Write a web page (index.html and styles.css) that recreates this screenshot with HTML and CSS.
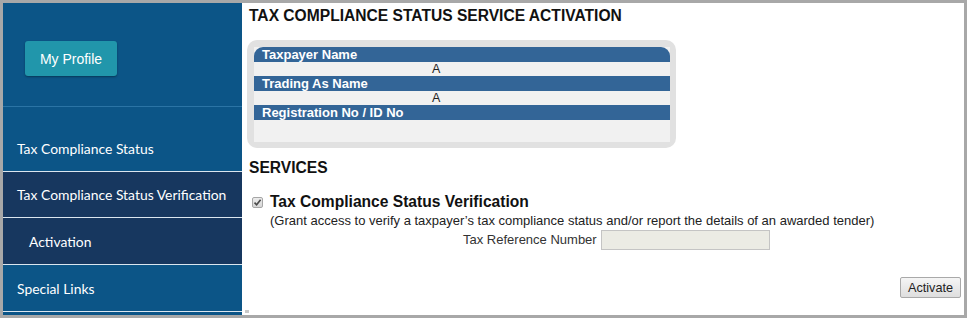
FILE: index.html
```html
<!DOCTYPE html>
<html>
<head>
<meta charset="utf-8">
<link rel="stylesheet" href="styles.css">
</head>
<body>
<div class="frame">
  <aside class="sidebar">
    <div class="profile-area">
      <button class="profile-btn">My Profile</button>
    </div>
    <div class="menu-gap"></div>
    <a class="menu-item">Tax Compliance Status</a>
    <a class="menu-item dark">Tax Compliance Status Verification</a>
    <a class="menu-item dark sub">Activation</a>
    <a class="menu-item">Special Links</a>
  </aside>
  <main class="main">
    <h1 class="title">TAX COMPLIANCE STATUS SERVICE ACTIVATION</h1>
    <div class="panel">
      <div class="panel-inner">
        <div class="bar first">Taxpayer Name</div>
        <div class="val">A</div>
        <div class="bar">Trading As Name</div>
        <div class="val">A</div>
        <div class="bar">Registration No / ID No</div>
        <div class="val empty"></div>
      </div>
    </div>
    <h2 class="title services">SERVICES</h2>
    <div class="service">
      <span class="chk"><svg width="9" height="9" viewBox="0 0 9 9"><path d="M1.5 4.6 L3.6 6.8 L7.6 1.8" fill="none" stroke="#4a4a4a" stroke-width="1.6"/></svg></span>
      <span class="service-name">Tax Compliance Status Verification</span>
    </div>
    <div class="desc">(Grant access to verify a taxpayer’s tax compliance status and/or report the details of an awarded tender)</div>
    <div class="ref-row">
      <label class="ref-label">Tax Reference Number</label>
      <input type="text" class="ref-input" disabled>
    </div>
    <div class="actions">
      <button class="activate">Activate</button>
    </div>
    <span class="grip"></span>
  </main>
</div>
</body>
</html>
```

FILE: styles.css
```css
html, body {
  margin: 0;
  padding: 0;
  background: #ffffff;
}
.frame {
  width: 961px;
  height: 312px;
  border: 3px solid #a8a8a8;
  display: flex;
  overflow: hidden;
  font-family: "Liberation Sans", Arial, sans-serif;
}
.sidebar {
  width: 239px;
  flex: none;
  background: #0c5587;
  display: flex;
  flex-direction: column;
}
.profile-area {
  height: 104px;
  border-bottom: 1px solid #2b74a5;
  padding: 38px 0 0 22px;
  box-sizing: border-box;
}
.profile-btn {
  width: 92px;
  height: 35px;
  background: #2196ab;
  border: none;
  border-radius: 3px;
  box-shadow: 0 1px 2px rgba(0,0,0,0.35);
  color: #ffffff;
  font-family: "Liberation Sans", Arial, sans-serif;
  font-size: 14px;
  padding: 0;
}
.menu-gap {
  height: 18px;
}
.menu-item {
  display: flex;
  align-items: center;
  height: 46px;
  border-bottom: 1px solid #dbe6ef;
  padding-left: 14px;
  color: #ffffff;
  font-family: Lato, "Open Sans", sans-serif;
  font-size: 13.9px;
}
.menu-item.dark {
  background: #17375f;
  height: 45px;
}
.menu-item.sub {
  padding-left: 26px;
  height: 46px;
}
.main {
  flex: 1;
  padding: 4px 0 0 7px;
  position: relative;
}
.title {
  margin: 0;
  font-size: 15.6px;
  font-weight: bold;
  line-height: 18px;
  color: #111111;
}
.panel {
  margin: 15px 0 0 -2px;
  width: 429px;
  height: 108px;
  background: #e1e1e1;
  border-radius: 10px;
  padding: 7px 6px 6px 7px;
  box-sizing: border-box;
}
.panel-inner {
  background: #f1f1f1;
  height: 95px;
}
.bar {
  height: 15px;
  line-height: 15px;
  background: #336597;
  color: #ffffff;
  font-weight: bold;
  font-size: 13px;
  padding-left: 8px;
}
.bar.first {
  border-radius: 9px 9px 0 0;
}
.val {
  height: 14px;
  line-height: 14px;
  font-size: 12.5px;
  color: #222222;
  padding-left: 178px;
}
.val.empty {
  height: 21px;
}
.services {
  margin-top: 11px;
}
.service {
  display: flex;
  align-items: center;
  margin-top: 16px;
  height: 18px;
}
.chk {
  display: flex;
  align-items: center;
  justify-content: center;
  margin: 0 7px 0 3px;
  width: 9px;
  height: 9px;
  border: 1px solid #a6a6a6;
  border-radius: 2px;
  background: linear-gradient(#ececec, #d6d6d6);
}
.service-name {
  font-size: 15.6px;
  font-weight: bold;
  color: #111111;
}
.desc {
  font-size: 13px;
  line-height: 15px;
  color: #222222;
  padding-left: 21px;
  margin-top: 2px;
}
.ref-row {
  display: flex;
  align-items: center;
  padding-left: 214px;
  margin-top: 1px;
  height: 21px;
}
.ref-label {
  font-size: 13px;
  color: #333333;
  margin-right: 4px;
}
.ref-input {
  width: 169px;
  height: 20px;
  box-sizing: border-box;
  background: #ebebe4;
  border: 1px solid #c4c4c4;
  padding: 0;
  margin: 0;
}
.actions {
  display: flex;
  justify-content: flex-end;
  padding-right: 3px;
  margin-top: 27px;
}
.activate {
  height: 21px;
  width: 61px;
  font-family: "Liberation Sans", Arial, sans-serif;
  font-size: 12.7px;
  color: #222222;
  background: linear-gradient(#f5f5f5, #dedede);
  border: 1px solid #a9a9a9;
  border-radius: 2px;
  padding: 0;
}
.grip {
  position: absolute;
  left: 3px;
  bottom: 2px;
  width: 4px;
  height: 3px;
  background: #c8c8c8;
}
```
